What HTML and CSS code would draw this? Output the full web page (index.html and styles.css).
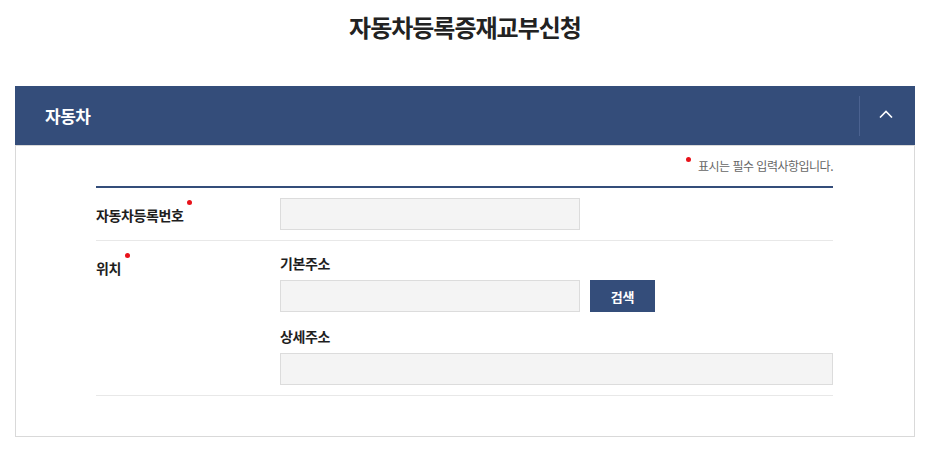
FILE: index.html
```html
<!DOCTYPE html>
<html lang="ko">
<head>
<meta charset="utf-8">
<title>자동차등록증재교부신청</title>
<link rel="stylesheet" href="styles.css">
</head>
<body>
<div class="page">
  <h1 class="title">자동차등록증재교부신청</h1>
  <section class="panel">
    <header class="panel-head">
      <h2 class="panel-title">자동차</h2>
      <button class="toggle" type="button" aria-label="접기">
        <svg width="14" height="8" viewBox="0 0 14 8"><path d="M1 7.5 L7 1.5 L13 7.5" fill="none" stroke="#fff" stroke-width="1.6"/></svg>
      </button>
    </header>
    <div class="panel-body">
      <p class="note"><span class="dot"></span>표시는 필수 입력사항입니다.</p>
      <div class="form">
        <div class="row">
          <div class="label"><span class="req">자동차등록번호</span></div>
          <div class="field">
            <input class="input w300" type="text">
          </div>
        </div>
        <div class="row">
          <div class="label"><span class="req">위치</span></div>
          <div class="field">
            <div class="sub-label">기본주소</div>
            <div class="inline">
              <input class="input w300" type="text">
              <button class="btn" type="button">검색</button>
            </div>
            <div class="sub-label second">상세주소</div>
            <input class="input full" type="text">
          </div>
        </div>
      </div>
    </div>
  </section>
</div>
</body>
</html>
```

FILE: styles.css
```css
* { box-sizing: border-box; }
html, body { margin: 0; padding: 0; background: #fff; }
body {
  font-family: "Noto Sans CJK KR", "Noto Sans", sans-serif;
  color: #222;
}
.page { padding: 0 20px 0 15px; }
.title {
  margin: 0;
  padding-top: 11px;
  height: 86px;
  text-align: center;
  font-size: 24px;
  line-height: 32px;
  font-weight: 700;
  letter-spacing: -1px;
  color: #222;
}
.panel { width: 900px; }
.panel-head {
  display: flex;
  align-items: center;
  height: 59px;
  background: #344d7a;
}
.panel-title {
  flex: 1;
  margin: 0;
  padding-left: 30px;
  font-size: 17px;
  line-height: 24px;
  font-weight: 700;
  color: #fff;
  letter-spacing: -0.5px;
}
.toggle {
  width: 56px;
  height: 40px;
  padding: 0 3px 3px 0;
  border: 0;
  border-left: 1px solid #4b6290;
  background: transparent;
  display: flex;
  align-items: center;
  justify-content: center;
  cursor: pointer;
}
.panel-body {
  border: 1px solid #d9d9d9;
  padding: 11px 81px 40px 80px;
}
.note {
  margin: 0 0 11px;
  text-align: right;
  font-size: 12px;
  line-height: 18px;
  color: #666;
  letter-spacing: -0.5px;
}
.dot {
  display: inline-block;
  width: 5px;
  height: 5px;
  border-radius: 50%;
  background: #e8121a;
  vertical-align: 9px;
  margin-right: 7px;
}
.form { border-top: 2px solid #344d7a; }
.row {
  display: flex;
  border-bottom: 1px solid #e8e8e8;
}
.label {
  width: 184px;
  flex: none;
  padding-top: 15px;
  font-size: 14px;
  line-height: 24px;
  font-weight: 700;
  color: #1e1e1e;
  letter-spacing: -0.4px;
}
.req { position: relative; }
.req::after {
  content: "";
  position: absolute;
  right: -9px;
  top: -5px;
  width: 5px;
  height: 5px;
  border-radius: 50%;
  background: #e8121a;
}
.field {
  flex: 1;
  padding: 10px 0;
}
.sub-label {
  font-size: 14px;
  line-height: 24px;
  font-weight: 700;
  color: #1e1e1e;
  letter-spacing: -0.4px;
  margin-bottom: 5px;
}
.sub-label.second { margin-top: 12px; }
.inline { display: flex; gap: 10px; }
.input {
  display: block;
  height: 32px;
  margin: 0;
  border: 1px solid #dcdcdc;
  background: #f4f4f4;
  font: inherit;
}
.w300 { width: 300px; }
.full { width: 100%; }
.btn {
  width: 65px;
  height: 32px;
  border: 0;
  background: #344d7a;
  color: #fff;
  font-family: inherit;
  font-size: 13px;
  font-weight: 700;
  letter-spacing: -0.3px;
}
```
